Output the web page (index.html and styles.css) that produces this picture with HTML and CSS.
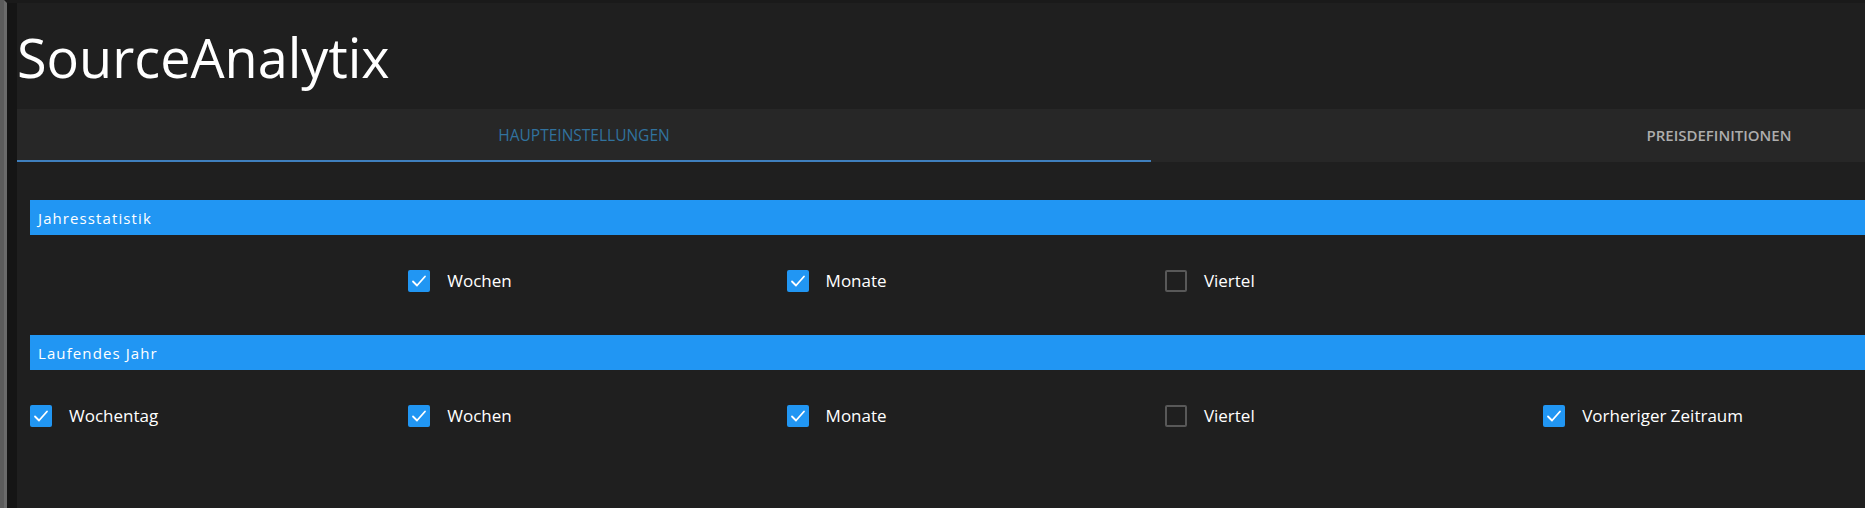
FILE: index.html
```html
<!DOCTYPE html>
<html lang="de">
<head>
<meta charset="UTF-8">
<title>SourceAnalytix</title>
<link rel="stylesheet" href="styles.css">
</head>
<body>
<div class="page">
    <h1 class="title">SourceAnalytix</h1>

    <div class="tabs">
        <div class="tab active">Haupteinstellungen</div>
        <div class="tab">Preisdefinitionen</div>
    </div>

    <div class="content">
        <div class="section-bar">Jahresstatistik</div>
        <div class="options">
            <span class="cell"></span>
            <label class="opt"><span class="box on"><svg viewBox="0 0 22 22"><polyline points="5,11.5 9,15.5 17,6.5"/></svg></span>Wochen</label>
            <label class="opt"><span class="box on"><svg viewBox="0 0 22 22"><polyline points="5,11.5 9,15.5 17,6.5"/></svg></span>Monate</label>
            <label class="opt"><span class="box"></span>Viertel</label>
        </div>

        <div class="section-bar">Laufendes Jahr</div>
        <div class="options">
            <label class="opt"><span class="box on"><svg viewBox="0 0 22 22"><polyline points="5,11.5 9,15.5 17,6.5"/></svg></span>Wochentag</label>
            <label class="opt"><span class="box on"><svg viewBox="0 0 22 22"><polyline points="5,11.5 9,15.5 17,6.5"/></svg></span>Wochen</label>
            <label class="opt"><span class="box on"><svg viewBox="0 0 22 22"><polyline points="5,11.5 9,15.5 17,6.5"/></svg></span>Monate</label>
            <label class="opt"><span class="box"></span>Viertel</label>
            <label class="opt"><span class="box on"><svg viewBox="0 0 22 22"><polyline points="5,11.5 9,15.5 17,6.5"/></svg></span>Vorheriger Zeitraum</label>
        </div>
    </div>
</div>
</body>
</html>
```

FILE: styles.css
```css
html,body,h1,div{margin:0;padding:0;}
body{background:#1f1f1f;color:#fff;font-family:"Open Sans","Noto Sans",sans-serif;border-left:4px solid #5c5c5c;overflow:hidden;}
.page{width:2270px;min-height:508px;border-left:3px solid #6b6b6b;box-shadow:inset 10px 0 0 #151515;padding-left:10px;border-top:3px solid #1a1a1a;}

.title{font-size:54px;font-weight:400;line-height:74px;padding:17px 0 15px;color:#fff;}

.tabs{display:grid;grid-template-columns:1134px 1136px;background:#272727;height:53px;}
.tab{display:flex;align-items:center;justify-content:center;text-transform:uppercase;font-size:15px;color:#adadad;font-weight:600;border-bottom:2px solid transparent;}
.tab.active{color:#31729e;font-weight:400;font-size:15.5px;border-bottom-color:#3f7fbd;}

.content{padding:38px 0 0 13px;}
.section-bar{background:#2196f3;height:35px;display:flex;align-items:center;padding-left:8px;font-size:15px;letter-spacing:1.1px;color:#fff;}
.options{display:grid;grid-template-columns:repeat(6,378.3px);margin:34px 0 44px;height:22px;}
.opt{display:flex;align-items:center;gap:17px;font-size:17px;color:#fff;}
.box{width:22px;height:22px;box-sizing:border-box;border:2px solid #585858;border-radius:2px;flex:none;}
.box.on{background:#2196f3;border:none;}
.box svg{display:block;width:22px;height:22px;fill:none;stroke:#fff;stroke-width:1.8;stroke-linecap:round;stroke-linejoin:round;}
```
